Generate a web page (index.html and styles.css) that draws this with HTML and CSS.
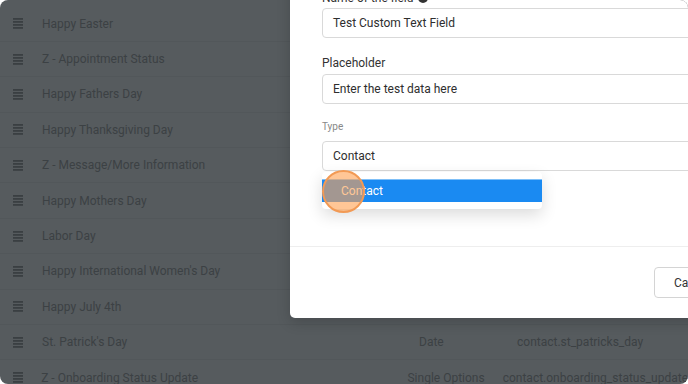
FILE: index.html
```html
<!DOCTYPE html>
<html>
<head>
<meta charset="utf-8">
<link rel="stylesheet" href="styles.css">
</head>
<body>
<div class="frame">
  <div class="table">
    <div class="row"><span class="grip"><svg width="10" height="11" viewBox="0 0 10 11"><rect y="0" width="10" height="1.8"/><rect y="3" width="10" height="1.8"/><rect y="6" width="10" height="1.8"/><rect y="9" width="10" height="1.8"/></svg></span><span class="name">Happy Easter</span></div>
    <div class="row"><span class="grip"><svg width="10" height="11" viewBox="0 0 10 11"><rect y="0" width="10" height="1.8"/><rect y="3" width="10" height="1.8"/><rect y="6" width="10" height="1.8"/><rect y="9" width="10" height="1.8"/></svg></span><span class="name">Z - Appointment Status</span></div>
    <div class="row"><span class="grip"><svg width="10" height="11" viewBox="0 0 10 11"><rect y="0" width="10" height="1.8"/><rect y="3" width="10" height="1.8"/><rect y="6" width="10" height="1.8"/><rect y="9" width="10" height="1.8"/></svg></span><span class="name">Happy Fathers Day</span></div>
    <div class="row"><span class="grip"><svg width="10" height="11" viewBox="0 0 10 11"><rect y="0" width="10" height="1.8"/><rect y="3" width="10" height="1.8"/><rect y="6" width="10" height="1.8"/><rect y="9" width="10" height="1.8"/></svg></span><span class="name">Happy Thanksgiving Day</span></div>
    <div class="row"><span class="grip"><svg width="10" height="11" viewBox="0 0 10 11"><rect y="0" width="10" height="1.8"/><rect y="3" width="10" height="1.8"/><rect y="6" width="10" height="1.8"/><rect y="9" width="10" height="1.8"/></svg></span><span class="name">Z - Message/More Information</span></div>
    <div class="row"><span class="grip"><svg width="10" height="11" viewBox="0 0 10 11"><rect y="0" width="10" height="1.8"/><rect y="3" width="10" height="1.8"/><rect y="6" width="10" height="1.8"/><rect y="9" width="10" height="1.8"/></svg></span><span class="name">Happy Mothers Day</span></div>
    <div class="row"><span class="grip"><svg width="10" height="11" viewBox="0 0 10 11"><rect y="0" width="10" height="1.8"/><rect y="3" width="10" height="1.8"/><rect y="6" width="10" height="1.8"/><rect y="9" width="10" height="1.8"/></svg></span><span class="name">Labor Day</span></div>
    <div class="row"><span class="grip"><svg width="10" height="11" viewBox="0 0 10 11"><rect y="0" width="10" height="1.8"/><rect y="3" width="10" height="1.8"/><rect y="6" width="10" height="1.8"/><rect y="9" width="10" height="1.8"/></svg></span><span class="name">Happy International Women's Day</span></div>
    <div class="row"><span class="grip"><svg width="10" height="11" viewBox="0 0 10 11"><rect y="0" width="10" height="1.8"/><rect y="3" width="10" height="1.8"/><rect y="6" width="10" height="1.8"/><rect y="9" width="10" height="1.8"/></svg></span><span class="name">Happy July 4th</span></div>
    <div class="row"><span class="grip"><svg width="10" height="11" viewBox="0 0 10 11"><rect y="0" width="10" height="1.8"/><rect y="3" width="10" height="1.8"/><rect y="6" width="10" height="1.8"/><rect y="9" width="10" height="1.8"/></svg></span><span class="name">St. Patrick's Day</span><span class="type">Date</span><span class="key">contact.st_patricks_day</span></div>
    <div class="row"><span class="grip"><svg width="10" height="11" viewBox="0 0 10 11"><rect y="0" width="10" height="1.8"/><rect y="3" width="10" height="1.8"/><rect y="6" width="10" height="1.8"/><rect y="9" width="10" height="1.8"/></svg></span><span class="name">Z - Onboarding Status Update</span><span class="type">Single Options</span><span class="key">contact.onboarding_status_update</span></div>
  </div>

  <div class="modal">
    <div class="modal-body">
      <div class="label">Name of the field <span class="help">?</span></div>
      <div class="input">Test Custom Text Field</div>
      <div class="label spaced">Placeholder</div>
      <div class="input">Enter the test data here</div>
      <div class="label small">Type</div>
      <div class="input">Contact</div>
    </div>
    <div class="modal-footer">
      <div class="btn">Cancel</div>
    </div>
    <div class="dropdown">
      <div class="option">Contact</div>
    </div>
    <div class="cursor"></div>
  </div>
</div>
</body>
</html>
```

FILE: styles.css
```css
* { box-sizing: border-box; }
html, body { margin: 0; padding: 0; background: #ffffff; }
body { font-family: Roboto, Inter, "Liberation Sans", sans-serif; }

.frame {
  position: relative;
  width: 688px;
  height: 384px;
  border-radius: 8px;
  overflow: hidden;
  background: #565b5e;
}

.table {
  display: flex;
  flex-direction: column;
  padding-top: 6.5px;
}
.row {
  display: flex;
  align-items: center;
  height: 35.4px;
  border-bottom: 1px solid #52575a;
  font-size: 12px;
  color: #3c4144;
  flex-shrink: 0;
}
.grip { width: 42px; padding-left: 13px; display: flex; align-items: center; }
.grip svg { fill: #3a3f42; display: block; }
.name { width: 377px; }
.type { width: 98px; }
.key { white-space: nowrap; }

.modal {
  position: absolute;
  left: 290px;
  top: -34px;
  width: 440px;
  height: 352px;
  background: #ffffff;
  border-radius: 5px;
  box-shadow: 0 4px 14px rgba(0,0,0,0.18);
  display: flex;
  flex-direction: column;
}
.modal-body {
  padding: 24px 0 0 32px;
  height: 281px;
  border-bottom: 1px solid #eeeeee;
  display: flex;
  flex-direction: column;
}
.label {
  font-size: 12px;
  line-height: 16px;
  color: #333333;
  height: 16px;
  margin-bottom: 2px;
  display: flex;
  align-items: center;
  gap: 4px;
}
.label.spaced { margin-top: 17px; margin-bottom: 3px; }
.label.small {
  font-size: 10px;
  color: #888888;
  margin-top: 15px;
  margin-bottom: 6px;
}
.help {
  width: 10px; height: 10px;
  border-radius: 50%;
  background: #333333;
  color: #ffffff;
  font-size: 8px;
  font-weight: 700;
  display: inline-flex;
  align-items: center;
  justify-content: center;
}
.input {
  height: 30px;
  border: 1px solid #d9d9d9;
  border-radius: 4px;
  padding-left: 10px;
  display: flex;
  align-items: center;
  font-size: 12px;
  color: #2e2e2e;
}
.modal-footer {
  flex: 1;
  display: flex;
  align-items: flex-start;
  padding: 20px 0 0 364px;
}
.btn {
  height: 31px;
  width: 80px;
  border: 1px solid #d4d4d4;
  border-radius: 4px;
  font-size: 12px;
  color: #333333;
  display: flex;
  align-items: center;
  padding-left: 19px;
}

.dropdown {
  position: absolute;
  left: 32px;
  top: 206px;
  width: 220px;
  height: 37px;
  background: #ffffff;
  border-radius: 4px;
  box-shadow: 0 6px 16px rgba(0,0,0,0.14);
  padding-top: 7px;
}
.option {
  height: 23px;
  background: #1a8af2;
  border-top: 1px solid #7fc0f8;
  color: #ffffff;
  font-size: 12px;
  display: flex;
  align-items: center;
  padding-left: 19px;
}
.cursor {
  position: absolute;
  left: 32px;
  top: 204px;
  width: 43px;
  height: 43px;
  border-radius: 50%;
  background: rgba(255, 160, 80, 0.6);
  border: 2px solid #f29a55;
}
```
